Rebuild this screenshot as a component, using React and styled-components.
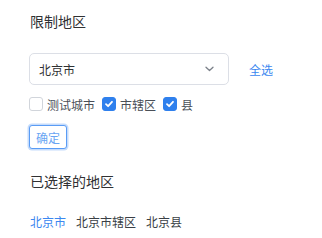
import React from "react";
import styled, { createGlobalStyle } from "styled-components";

const Global = createGlobalStyle`
  html, body { margin: 0; padding: 0; background: #fff; }
  body { font-family: "Noto Sans CJK SC", "Noto Sans", sans-serif; }
`;

const Page = styled.div`
  padding: 11px 0 0 29px;
  display: flex;
  flex-direction: column;
  align-items: flex-start;
`;

const Title = styled.div`
  font-size: 14px;
  line-height: 20px;
  color: #303133;
  margin-top: ${(p) => p.$mt || 0}px;
  padding-left: 1px;
`;

const SelectRow = styled.div`
  display: flex;
  align-items: center;
  gap: 20px;
  margin-top: 22px;
`;

const SelectBox = styled.div`
  box-sizing: border-box;
  width: 200px;
  height: 32px;
  border: 1px solid #dcdfe6;
  border-radius: 5px;
  display: flex;
  align-items: center;
  justify-content: space-between;
  padding: 0 14px 0 9px;
  font-size: 12px;
  color: #303133;
`;

const Link = styled.span`
  font-size: 12px;
  color: #3b87f0;
`;

const CheckRow = styled.div`
  display: flex;
  align-items: center;
  gap: 7px;
  margin-top: 9px;
  height: 20px;
`;

const CheckItem = styled.label`
  display: flex;
  align-items: center;
  gap: 4px;
  font-size: 12px;
  color: #4a4f57;
`;

const Box = styled.span`
  box-sizing: border-box;
  width: 14px;
  height: 14px;
  border-radius: 3px;
  border: 1px solid ${(p) => (p.$on ? "#2f80ed" : "#d1d5db")};
  background: ${(p) => (p.$on ? "#2f80ed" : "#fff")};
  display: flex;
  align-items: center;
  justify-content: center;
`;

const Button = styled.button`
  box-sizing: border-box;
  margin-top: 11px;
  width: 38px;
  height: 24px;
  border: 1px solid #5a9cf5;
  border-radius: 3px;
  background: #fff;
  color: #6aa5f3;
  font-family: inherit;
  font-size: 12px;
  padding: 0;
  box-shadow: 0 0 0 1.5px #c6dcfb;
`;

const Chips = styled.div`
  display: flex;
  gap: 10px;
  margin-top: 21px;
  font-size: 12px;
  line-height: 20px;
  padding-left: 1px;
`;

const Chip = styled.span`
  color: ${(p) => (p.$active ? "#3b87f0" : "#3a3f46")};
`;

const Check = () => (
  <svg width="10" height="10" viewBox="0 0 10 10">
    <path d="M2 5.2 L4.1 7.2 L8 2.8" stroke="#fff" strokeWidth="1.8" fill="none" strokeLinecap="round" strokeLinejoin="round" />
  </svg>
);

const Chevron = () => (
  <svg width="9" height="6" viewBox="0 0 9 6">
    <path d="M1 1.2 L4.5 4.5 L8 1.2" stroke="#7b8089" strokeWidth="1.3" fill="none" strokeLinecap="round" strokeLinejoin="round" />
  </svg>
);

export default function App() {
  const items = [
    { label: "测试城市", on: false },
    { label: "市辖区", on: true },
    { label: "县", on: true },
  ];
  return (
    <>
      <Global />
      <Page>
        <Title>限制地区</Title>
        <SelectRow>
          <SelectBox>
            <span>北京市</span>
            <Chevron />
          </SelectBox>
          <Link>全选</Link>
        </SelectRow>
        <CheckRow>
          {items.map((it) => (
            <CheckItem key={it.label}>
              <Box $on={it.on}>{it.on && <Check />}</Box>
              {it.label}
            </CheckItem>
          ))}
        </CheckRow>
        <Button>确定</Button>
        <Title $mt={22}>已选择的地区</Title>
        <Chips>
          <Chip $active>北京市</Chip>
          <Chip>北京市辖区</Chip>
          <Chip>北京县</Chip>
        </Chips>
      </Page>
    </>
  );
}
